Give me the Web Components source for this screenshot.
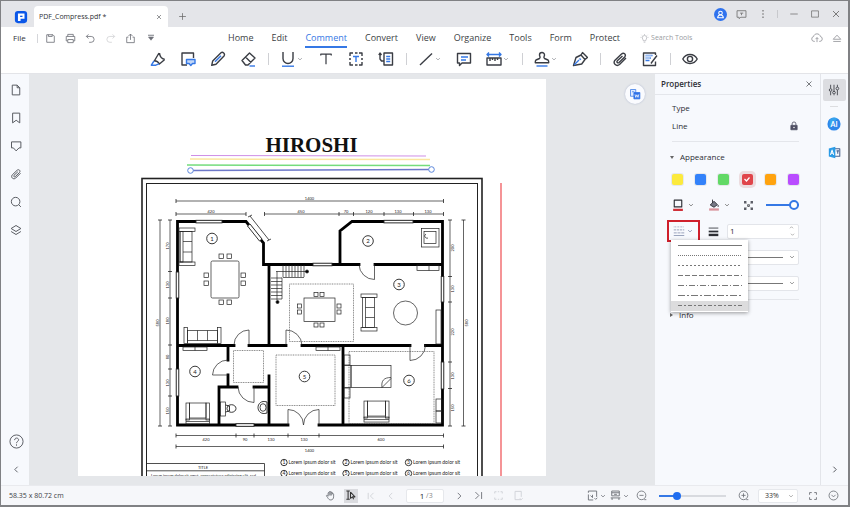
<!DOCTYPE html>
<html lang="en">
<head>
<meta charset="utf-8">
<title>PDF_Compress.pdf</title>
<style>
html,body{margin:0;height:100%}
body{font:8px/12px "Open Sans","Noto Sans",sans-serif;color:#3c3f45;--blue:#3578e5;--rail:#f7f9fd;--ink:#3a3d44;--mute:#82858c}
</style>
</head>
<body>
<app-window></app-window>
<script>
const ICONS={
 logo:'<rect x="1" y="1" width="14" height="14" rx="3.5" fill="#0b57e8" stroke="none"/><path d="M4.500 4h7.500v6h-4.500v2.500h-3z" fill="#fff" stroke="none"/><path d="M7 6.500h2.700v1.500H7z" fill="#0b57e8" stroke="none"/>',
 close:'<path d="M4 4l8 8M12 4l-8 8"/>',
 plus:'<path d="M8 2v12M2 8h12"/>',
 save:'<path d="M2.500 2.500h9l2 2v9h-11zM5 2.500v2.500h5.500V2.500"/>',
 print:'<path d="M4 5V2h8v3M4 11.500H1.800V5h12.400v6.500H12M4 9.500h8V14H4z"/>',
 undo:'<path d="M5 2L2 5l3 3M2 5h7a4 4 0 0 1 0 8.500H6"/>',
 redo:'<path d="M11 2l3 3-3 3M14 5H7a4 4 0 0 0 0 8.500h3"/>',
 share:'<path d="M5 6H2.500v8h11V6H11M8 10V1.500M5 4.500l3-3 3 3"/>',
 more:'<path d="M2 2.500h12" stroke-width="1.800"/><path d="M3 6h10l-5 6.500z" fill="currentColor"/>',
 marker:'<path d="M4 10.500L9 2M9.500 2c.3 3.500 2 5.700 5.300 6.500M4.200 9.700c2.500.2 4.200 1.200 5.200 3.300L14.500 8.700"/><path d="M4 10l-2.700 4.200h4.500L9 12.800" stroke="#3578e5"/>',
 note:'<path d="M7 14H2V2h11.500v5"/><path d="M6.500 8.500h8.500v4h-2.500l-1.700 2-1.700-2H6.500z" stroke="#3578e5" fill="#c3d7f7"/>',
 pencil:'<path d="M1.700 14.300l1-4.300L11 1.800c1.700-1.400 4.500 1 3 3.200L6 13.200z"/><path d="M5 10.800l6-6" stroke="#3578e5"/>',
 eraser:'<path d="M2 9.500L9.500 2 15 7l-7 7H5.500zM5.500 6l5.500 5.500"/><path d="M9.500 15H15" stroke="#3578e5"/>',
 under:'<path d="M3 1v6.500a5 5 0 0 0 10 0V1"/><path d="M2 15.200h12" stroke="#3578e5"/>',
 text:'<path d="M2 4V2.500h12V4M8 2.500v11.500"/>',
 textbox:'<path d="M2 5V2h3M7 2h2.500M11 2h3v3M14 11v3h-3M9.500 14H7M5 14H2v-3M1 8h2M13 8h2"/><path d="M5 5.500h6M8 5.500v5.500" stroke="#3578e5"/>',
 callout:'<path d="M6 2h8.500v12H6zM6 10H3.500L2 8V2M.8 4L2 2l1.500 2"/><path d="M8.200 5.500h4M8.200 8h4M8.200 10.500h4" stroke="#3578e5"/>',
 line:'<path d="M2 14L14 2.500"/>',
 comment:'<path d="M1.500 2.500h13v9.500H6L3.500 14.500V12h-2z"/><path d="M5 6h7M5 9h5" stroke="#3578e5"/>',
 measure:'<path d="M1 7h14v7H1zM4 7v3M6.500 7v2M9 7v3M11.500 7v2"/><path d="M1 3.500h14M3 1.500l-2 2 2 2M13 1.500l2 2-2 2" stroke="#3578e5"/>',
 stamp:'<path d="M5.500 7.500c1.500-1.500 0-2 0-3.500a2.500 2.500 0 0 1 5 0c0 1.500-1.500 2 0 3.500l3.500 1.500c1 1 .7 2 .7 2.800H1.300c0-.8-.3-1.800.7-2.800z"/><path d="M2.500 15h11" stroke="#3578e5"/>',
 pen:'<path d="M1.500 14.500L4 6.500l5-2.500 4 4.500-3.300 4.500zM9 4l1.500-2.500 5 5L13 8.500"/><path d="M2 14l5-5M7.500 7.500l1.300 1.300" stroke="#3578e5"/>',
 clip:'<path d="M14 7l-6.500 6.500c-3 2.500-7-1-4.500-4.300L9.500 3c2.300-2 5 .6 3.200 3L7 11.500c-1.300 1-2.700-.3-1.700-1.700L10.500 5"/>',
 form:'<path d="M13.500 10.500v4h-12V2h12v2M15 4.500l-5 6.500-1 1.500"/><path d="M3.500 4.500h7M3.500 7h5.500M3.500 9.500h4" stroke="#3578e5"/><path d="M3 4h7l-3 5H3z" fill="#c3d7f7" stroke="none" opacity=".7"/>',
 eye:'<path d="M.8 8C4 2 12 2 15.200 8 12 14 4 14 .8 8z"/><circle cx="8" cy="8" r="2.600"/>',
 avatar:'<circle cx="8" cy="8" r="8" fill="#2f72ee" stroke="none"/><circle cx="8" cy="6.200" r="2.200" stroke="#fff"/><path d="M4.500 12c.5-4.500 6.500-4.500 7 0z" stroke="#fff"/>',
 feedback:'<path d="M1.500 2.500h13v9.500H7L4.500 14v-2h-3zM6 6h4.500M8 6v3"/>',
 dots:'<path d="M8 1.500v2.500M8 6.800v2.500M8 12v2.500" stroke-width="2"/>',
 min:'<path d="M2 8h12"/>',max:'<path d="M2.500 3h11v10h-11z"/>',
 bulb:'<path d="M6 12c0-2-2-2.800-2-5.300a4 4 0 0 1 8 0c0 2.500-2 3.300-2 5.300zM6.500 14.500h3M8 0v1.500M1 6h1.500M13.500 6H15M2.500 1.500l1 1M13.500 1.500l-1 1"/>',
 cloud:'<path d="M5 12.500H4a3.300 3.300 0 0 1-.5-6.500c.8-4.700 8-4.700 9 0a3.300 3.300 0 0 1-.5 6.500h-1M8 13.500V7.500M6 9.500l2-2 2 2"/>',
 up:'<path d="M2 10l6-6.500L14 10zM2 13.500h12"/>',
 page:'<path d="M3 1.500h6.500L13 5v9.500H3zM9.500 1.500V5H13"/>',
 bookmark:'<path d="M3.500 1.500h9.500v13L8.200 11l-4.700 3.500z"/>',
 shield:'<path d="M2 2.500h12.500v8H12l-3.800 4-3.700-4H2z"/>',
 search:'<circle cx="7.500" cy="7.500" r="5.700"/><path d="M11.500 11.500l3 3"/>',
 layers:'<path d="M1.500 6L8 2l6.500 4L8 10zM1.500 10L8 14l6.500-4"/>',
 help:'<circle cx="8" cy="8" r="7"/><path d="M6 6.500c0-3 4.200-2.700 4.200-.3C10.200 7.800 8 8 8 9.800M8 11v1.500"/>',
 left:'<path d="M10 3L5 8l5 5"/>',right:'<path d="M6 3l5 5-5 5"/>',down:'<path d="M3 5.500l5 5 5-5"/>',
 first:'<path d="M12 3L7 8l5 5M3.500 3v10"/>',last:'<path d="M3.500 3l5 5-5 5M12.500 3v10"/>',
 sliders:'<path d="M3.500 1v5M3.500 10v5M8 1v9M8 14v1M12.500 1v3M12.500 8v7"/><circle cx="3.500" cy="8" r="1.800"/><circle cx="8" cy="11.500" r="1.800"/><circle cx="12.500" cy="6" r="1.800"/>',
 ai:'<circle cx="8" cy="8" r="7.500" fill="#2d86ea" stroke="none"/><path d="M3 3a7.500 7.500 0 0 1 9-1.500L3 13z" fill="#3bb6ee" stroke="none" opacity=".6"/><text x="8" y="11" text-anchor="middle" font-family="Lato,sans-serif" font-weight="700" font-size="8" fill="#fff" stroke="none">AI</text>',
 trans:'<path d="M8.500 3.500h6v9h-6" stroke="#49618e"/><path d="M1 3l8-2v14l-8-2z" fill="#2a9be6" stroke="none"/><path d="M3 11l2-6 2 6M3.700 9h2.600" stroke="#fff"/><path d="M10.500 6h3M12 6v3.500" stroke="#49618e"/>',
 lock:'<path d="M3 7h10v7H3z" fill="#4e4f63" stroke="#4e4f63"/><path d="M5 7V4.500a3 3 0 0 1 6 0V7" stroke="#4e4f63"/><circle cx="8" cy="10.500" r="1.200" fill="#fff" stroke="none"/>',
 stroke:'<path d="M3 1.500h10v9H3z"/><path d="M1.500 14.500h13" stroke="#cf3038" stroke-width="3"/>',
 fill:'<path d="M3 8l5-5 4.500 4.500L8 11z" fill="#777986"/><path d="M6 .800v4.500M13.500 8v2.500"/><path d="M1.500 14h13" stroke="#d9929a" stroke-width="3"/>',
 checker:'<path d="M1.500 1.500h3.500v3.500H1.500zM11 1.500h3.500v3.500H11zM6 6h4v4H6zM1.500 11h3.500v3.500H1.500zM11 11h3.500v3.500H11z" fill="#5b5d66" stroke="none"/><path d="M5 5l6 6M11 5l-6 6" stroke="#aaa"/>',
 dashes:'<path d="M1 2.500h14" stroke-dasharray="1 1"/><path d="M1 6.500h14" stroke-dasharray="3 1"/><path d="M1 10.500h14" stroke-dasharray="4 1"/><path d="M1 14h14"/>',
 weights:'<path d="M1 3h14" stroke-width="1.200"/><path d="M1 8h14" stroke-width="2.500"/><path d="M1 13h14" stroke-width="3.500"/>',
 hand:'<path d="M4.500 9V4.500c0-1 1.500-1 1.500 0V3c0-1 1.600-1 1.600 0 0-1 1.600-1 1.600 0v1c0-1 1.600-1 1.600 0v2c0-1 1.700-1 1.700 0v4c0 2.500-1.500 4.500-4 4.500S5 13 3.500 10.500L2 8.500c0-1 1.300-1.200 2.500.5zM6 4.500V8M7.600 3v5M9.200 4v4"/>',
 select:'<path d="M2 1.500h5M4.500 1.500v12M2 13.500h5M8 3l6.500 7h-3.500l1.500 3.500M8 3v9l3-2"/>',
 fit:'<path d="M2 4V1.500h12V10M2 6.500v8h7M5 8l3 3V7M11 12l1.500 1.500L15 11.500"/>',
 view:'<path d="M2.500 1.500h11v7h-11zM2.500 4h11M1 11.500h14M3 14.500v-3M13 14.500v-3M6 6.300h4"/>',
 zout:'<circle cx="8" cy="7.800" r="6.300"/><path d="M5 7.800h6M12 14h3"/>',
 zin:'<circle cx="8" cy="7.800" r="6.300"/><path d="M5 7.800h6M8 4.800v6M12 14h3"/>',
 full:'<path d="M2.500 6V2.500H6M10 2.500h3.500V6M13.500 10v3.500H10M6 13.500H2.500V10"/>',
 circdown:'<circle cx="8" cy="8" r="6.500"/><path d="M5 7l3 3 3-3"/>',
 crop:'<path d="M2.500 5V2.500H5M11 2.500h2.500V5M13.500 11v2.500H11M5 13.500H2.500V11M7 2.500h2M7 13.500h2"/>',
 leaf:'<path d="M3 2h9v8M12 14H3V2M10 12l2 2 2-2"/>',
 word:'<path d="M2 2h7v9H2z" fill="#dfeaff" stroke="#3578e5"/><path d="M6.500 6h8v8.500h-8z" fill="#2f72e8" stroke="#2f72e8"/><path d="M8 8.500l1 4 1.500-3.500 1.500 3.500 1-4" stroke="#fff"/><path d="M4 5h3" stroke="#3578e5"/>'
};
function define(name,css,html,extra){
 const t=document.createElement('template');
 t.innerHTML='<style>*{box-sizing:border-box}button{all:unset;box-sizing:border-box;display:flex;align-items:center;justify-content:center;cursor:pointer}'+css+'</style>'+html;
 customElements.define(name,class extends HTMLElement{
  connectedCallback(){ if(this.shadowRoot)return;
   this.attachShadow({mode:'open'}).append(t.content.cloneNode(true)); if(extra)extra.call(this,this.shadowRoot); }
 });
}
const ic=(n,s=12,w='1.300')=>`<ui-icon name="${n}" size="${s}" weight="${w}"></ui-icon>`;
const btn=(n,label,s,w,cls='')=>`<button type="button" class="${cls}" aria-label="${label}">${ic(n,s,w)}</button>`;

define('ui-icon',':host{display:inline-flex;flex:none}svg{display:block;fill:none;stroke:currentColor;stroke-linejoin:round}','<svg viewBox="0 0 16 16" aria-hidden="true"></svg>',function(r){
 const s=r.querySelector('svg'),z=this.getAttribute('size');
 s.setAttribute('width',z);s.setAttribute('height',z);s.setAttribute('stroke-width',this.getAttribute('weight'));
 s.innerHTML=ICONS[this.getAttribute('name')];
});

define('title-bar',`:host{display:flex;height:26px;background:#e4e5e9;align-items:center;font-size:7px;color:#2e3035}
 .logo{display:flex;margin:6px 6px 0 13px}
 .tab{align-self:flex-end;display:flex;align-items:center;justify-content:space-between;width:134px;height:21px;padding:0 5px;background:#fff;border-radius:4px 4px 0 0;white-space:nowrap}
 .new{margin:4px 0 0 8px;width:12px;color:#666}
 .win{margin-left:auto;display:flex;align-items:center;height:26px;padding-right:2px;color:#777}
 .win button{width:21px;height:20px}.win i{width:1px;height:8px;background:#c8c9cd;margin:0 5px 0 4px}`,
 `<span class="logo">${ic('logo',14)}</span><div class="tab"><span>PDF_Compress.pdf *</span>${btn('close','Close tab',8,1)}</div>${btn('plus','New tab',9,1.300,'new')}
 <div class="win">${btn('avatar','Account',13)}${btn('feedback','Feedback',11)}${btn('dots','More',10)}<i></i>${btn('min','Minimize',10)}${btn('max','Maximize',10)}${btn('close','Close',12)}</div>`);

define('menu-bar',`:host{display:flex;align-items:center;height:22px;background:#fff;padding-left:12px;white-space:nowrap}
 .quick{display:flex;align-items:center;width:215px;color:#6e7178}.quick button{width:20px;height:16px}
 .quick .file{width:auto;color:#303238}.quick i{width:1px;height:9px;background:#d5d6da;margin:0 3px 0 11px}
 .off{opacity:.3}
 nav{display:flex;gap:18px;font-size:9px}nav a{color:#3c3f45;text-decoration:none;height:20px;line-height:20px}
 nav a[aria-current]{color:var(--blue);border-bottom:2px solid var(--blue)}
 label{display:flex;align-items:center;gap:2px;margin-left:20px;color:#9a9ca2}
 input{width:52px;border:0;padding:0;background:none;font:inherit;font-size:7px;color:inherit;outline:0}input::placeholder{color:#9a9ca2;opacity:1}
 .end{margin-left:auto;display:flex;color:#85878d;padding-right:1px}.end button{width:20px}`,
 `<div class="quick"><button type="button" class="file">File</button><i></i>${btn('save','Save',11,1.200)}${btn('print','Print',11,1.200)}${btn('undo','Undo',11,1.200)}${btn('redo','Redo',11,1.200,'off')}${btn('share','Share',11,1.200)}${btn('more','Customize',8,1.200)}</div>
 <nav>${['Home','Edit','Comment','Convert','View','Organize','Tools','Form','Protect'].map(x=>`<a href="#"${x=='Comment'?' aria-current="page"':''}>${x}</a>`).join('')}</nav>
 <label>${ic('bulb',9,1)}<input aria-label="Search Tools" placeholder="Search Tools"></label>
 <div class="end">${btn('cloud','Upload',12,1)}${btn('up','Collapse ribbon',10,1.200)}</div>`);

const tools='marker note pencil eraser | under+ text textbox callout | line+ comment measure+ | stamp+ pen | clip form | eye'.split(' ');
define('tool-bar',`:host{display:flex;align-items:center;height:25px;background:#fff;padding:0 0 5px 142px;color:var(--ink);border-bottom:1px solid #e3e4e8}
 button{width:30px;height:20px}.drop{width:38px;padding-left:7px;justify-content:flex-start}.drop ui-icon+ui-icon{color:#92949a;margin-left:1px}
 i{width:1px;height:12px;background:#cfd0d4;margin:0 4px 0 5px}`,
 tools.map(t=>t=='|'?'<i></i>':t.endsWith('+')?`<button type="button" class="drop" aria-label="${t.slice(0,-1)}">${ic(t.slice(0,-1),16,1.400)}${ic('down',6,2)}</button>`:btn(t,t,t=='text'?14:16,1.400)).join(''));

define('side-rail',`:host{display:flex;flex-direction:column;align-items:center;width:28px;background:var(--rail);color:#55585f;padding:2px 0 2px 2px}
 button{width:26px;height:28px}.help{margin-top:auto}`,
 btn('page','Pages',12,1.300)+btn('bookmark','Bookmarks',12)+btn('shield','Comments',12)+btn('clip','Attachments',12)+btn('search','Search',12)+btn('layers','Layers',12)+btn('help','Help',15,1,'help')+btn('left','Collapse',9,1.600));

define('app-rail',`:host{display:flex;flex-direction:column;align-items:center;width:28px;background:var(--rail);border-left:1px solid #e3e5ea;padding:5px 1px 2px 0;color:#44464d}
 button{width:23px;height:28px}.on{height:22px;background:#dcdde1;border-radius:2px}i{width:8px;height:1px;background:#dcdde0;margin:5px 0 3px}.end{margin-top:auto}`,
 btn('sliders','Properties',12,1.200,'on')+'<i></i>'+btn('ai','AI assistant',14)+btn('trans','Translate',13)+btn('right','Expand',9,1.600,'end'));

/* Floor plan drawing, in the page's own units. */
function plan(){
 let s='';
 const L=(x1,y1,x2,y2,a='')=>s+=`<path d="M${x1} ${y1}L${x2} ${y2}" ${a}/>`;
 const R=(x,y,w,h,a='')=>s+=`<rect x="${x}" y="${y}" width="${w}" height="${h}" ${a}/>`;
 const C=(x,y,r,a='')=>s+=`<circle cx="${x}" cy="${y}" r="${r}" ${a}/>`;
 const T=(x,y,t,z=4,a='')=>s+=`<text x="${x}" y="${y}" font-size="${z}" ${a}>${t}</text>`;
 const V=(x,y,t)=>T(x,y,t,4,`transform="rotate(-90 ${x} ${y})"`);
 s+='<text class="title" x="311.500" y="152" font-size="21">HIROSHI</text>';
 L(191,155.5,426,156,'stroke="#cf8fe6" stroke-width="1"');L(190,159,430,159.5,'stroke="#fbe6a0" stroke-width="1.500"');
 L(187,165,430,165.5,'stroke="#74dc7c" stroke-width="1.500"');L(191,170.5,431,169.5,'stroke="#6d78c8" stroke-width="1.500"');
 C(190.5,170.5,2.8,'fill="#fff" stroke="#5a86dc" stroke-width="1"');C(431.5,169.5,2.8,'fill="#fff" stroke="#5a86dc" stroke-width="1"');
 L(501,183,501,480,'stroke="#f05a5f" stroke-width="1.300"');
 R(142,178.5,340,320,'stroke-width="1.600"');R(146.5,183.5,331,320,'stroke-width="1"');
 const H=(y,xs)=>{L(xs[0],y,xs.at(-1),y,'stroke-width=".700"');xs.forEach(x=>L(x,y-2,x,y+2));};
 const W=(x,ys)=>{L(x,ys[0],x,ys.at(-1),'stroke-width=".700"');ys.forEach(y=>L(x-2,y,x+2,y));};
 H(201,[176,443.5]);H(214,[176,246]);H(214,[264.5,339,353.5,384,413.5,443.5]);
 H(435.5,[176,236,254,288,319,443.5]);H(446.5,[176,443.5]);
 W(160,[220,426]);W(170,[220,271.5,298,345,369,396,426]);W(450,[220,276.5,302,362,388.5,426]);W(463.5,[220,426]);
 T(309.5,199.5,'1400');[[211,'420'],[301,'450'],[346,'70'],[369,'120'],[398,'130'],[428,'130']].forEach(a=>T(a[0],212.5,a[1]));
 [[206,'420'],[245,'90'],[271,'130'],[304,'130'],[381,'600']].forEach(a=>T(a[0],440.5,a[1]));T(309.5,451.5,'1400');
 [[246,'170'],[285,'130'],[321,'180'],[357,'80'],[383,'130'],[411,'150']].forEach(a=>V(168.500,a[0],a[1]));V(159,323,'580');
 [[248,'200'],[289,'130'],[332,'220'],[376,'130'],[408,'150']].forEach(a=>V(454,a[0],a[1]));V(467.500,323,'580');
 L(250,216,269,240);L(248,217,252,215);L(267,241,271,239);
 const w='stroke="#000" stroke-width="2.800" stroke-linecap="square"';
 s+=`<path ${w} d="M442.500 264.500H375M359 264.500H263.500V243L246 221.500H177.500V425H288M319 425H442.500V221.500H352L340 231V264M269 264.500V345M177.500 345.500H234M249 345.500H286M302 345.500H410M425.500 345.500H442M228 345.500V360M228 375V387M219 387H237M254 387H269M219 387V425M269 376V425M343 345.500V425"/>`;
 const win='fill="#fff" stroke-width=".900"';
 R(196,220.3,26,2.6,win);R(384,220.3,29,2.6,win);R(313,263.2,19,2.6,win);R(236,423.7,18,2.6,win);
 [[176.2,272,26],[176.2,369,27],[441.2,276.5,25.5],[441.2,362,27]].forEach(a=>R(a[0],a[1],2.6,a[2],win));
 s+='<path fill="#fff" stroke-width=".900" d="M247.500 226l2.500-2 12 15-2.500 2z"/>';
 [[1,212,238.500],[2,368,241],[3,399,284.500],[4,195,371.500],[5,304.500,376.500],[6,409,380.500]].forEach(a=>{C(a[1],a[2],5.3,'stroke-width=".900"');T(a[1],a[2]+2.2,a[0],6);});
 /* doors */
 s+='<path stroke-width=".700" d="M359 264.500a15.500 15.500 0 0 0 15.500 15v-15M249 345v-15a15 15 0 0 0-15 15M286 345v-15a16 16 0 0 1 16 15M410 345v15.500a15.500 15.500 0 0 0 15.500-15.500M228 375h-15.500a15.500 15.500 0 0 1 15.500-15M254 387v15.500a16 16 0 0 1-16-15.500M288 425v-15.500a15.500 15.500 0 0 1 15.500 15.500a15.500 15.500 0 0 1 15.500-15.500v15.500"/>';
 /* seating and tables */
 const f='stroke-width=".700"';
 R(179,228,16,3.5,f);R(179,262,16,3.500,f);R(180,231.5,12,30.5,f);R(180,231.5,3,30.5,f);L(183,241.500,192,241.500,f);L(183,252,192,252,f);
 R(211,261,28,37,f+' rx="1.500"');[[219,254],[227,254],[219,300],[227,300],[204,273],[204,281],[241,273],[241,281]].forEach(a=>R(a[0],a[1],4.500,4.500,f));
 R(184,327.5,3.5,16,f);R(217.500,327.500,3.500,16,f);R(187.500,330.500,30,13,f);L(187.500,340.500,217.500,340.500,f);L(197.500,330.500,197.500,340.500,f);L(207.500,330.500,207.500,340.500,f);
 R(304,298,31,23.500,f);[[314,292.500],[320,292.500],[314,323],[320,323],[297.500,304],[297.500,310],[337,304],[337,310]].forEach(a=>R(a[0],a[1],4,4,f));
 R(289.500,284,64,57.500,'stroke-width=".700" stroke="#555" stroke-dasharray="1 .700"');
 R(361,294,16,3.500,f);R(361,327.500,16,3.500,f);R(362.500,297.500,12,30,f);L(365.500,297.500,365.500,327.500,f);L(365.500,307.500,374.500,307.500,f);L(365.500,317.500,374.500,317.500,f);
 C(405.500,313,12,f);R(421.500,228.500,17.500,18.500,f);R(424,231.500,12,12,f);s+='<path stroke-width=".800" d="M426 234c-3 2 0 5 2 4"/>';
 R(417,265,22,5.500,f);L(429,265,429,270.500,f);R(436,310,5,34,f);
 for(let i=0;i<8;i++)L(283+i*3,265,283+i*3,277,f);L(276,271.500,306,271.500,f);L(283,277.500,304,277.500,f);
 for(let i=0;i<7;i++)L(271,278+i*3.500,282,278+i*3.500,f);L(282,277.500,282,299,f);L(277,271.500,277,300,f);
 C(307,271.500,1.500,'fill="#000"');C(277.500,302,1.500,'fill="#000"');
 R(183,347,24,3.500,f);L(195,347,195,350.500,f);R(316,347,24,3.500,f);L(328,347,328,350.500,f);
 const dot='stroke-width=".700" stroke="#555" stroke-dasharray="1 .700"';
 R(233.500,350.500,30,32,dot);R(276,355,59,50.500,dot);R(349,351.500,85,72,dot);
 [186,364].forEach(x=>{const k=x==186?0:1.500,y=403-k*1.300;R(x,y,3.500,17,f);R(x+20+k,y,3.500,17,f);R(x+3.500,y,16.500+k,15,f);R(x,y+16,23.500+k,5,f);L(x,y+18.500,x+23.500+k,y+18.500,f);});
 R(344,355,6,10,f);R(344,388,6,10,f);R(344,365.500,7,22,f);R(351,365.500,40,22,f);s+='<path stroke-width=".700" d="M391 377.500c-7 0-10 3-9 10l9-9"/>';
 R(436,399,6,12,f);R(436,411,6,12,f);
 R(220.500,402,5,14,f);s+='<ellipse cx="231.500" cy="408.500" rx="4.500" ry="3.800" stroke-width=".900"/><path stroke-width=".900" d="M225.500 405l4 1v5l-4 1"/><path stroke-width=".900" d="M267 402c-6-2-9 2-9 5.500s3 7.500 9 5.500z"/><ellipse cx="263" cy="407.500" rx="3" ry="3.800" stroke-width=".800"/>';
 /* title block and legend */
 s+='<path stroke-width=".800" d="M146.500 463.500H264.500V480M146.500 470.800H264.500"/>';T(203,468.800,'TITLE');
 T(151,477,'Lorem ipsum dolor sit amet, consectetuer adipiscing elit, sed',4,'class="start"');
 [[284,1],[346,2],[408.500,3]].forEach(a=>[[462.500,0],[473.500,3]].forEach(b=>{C(a[0],b[0],3.200,'stroke-width=".900"');T(a[0],b[0]+1.600,a[1]+b[1],5);T(a[0]+4.500,b[0]+1.700,'Lorem ipsum dolor sit',5,'class="start"');}));
 return s;
}
define('document-view',`:host{display:block;position:relative;flex:1;min-width:0;overflow:hidden;background:#e5e7ea;padding:5px 0 9px 49px}
 .sheet{width:468px;max-width:100%;height:100%;background:#fff;overflow:hidden}
 svg{display:block;width:100%;height:100%;fill:none;stroke:#222;stroke-width:.8}
 text{fill:#222;stroke:none;text-anchor:middle;font-family:Lato,sans-serif}.start{text-anchor:start}
 .title{font-family:"Liberation Serif",serif;font-weight:700;fill:#111}
 .convert{position:absolute;right:10px;top:10px;width:20px;height:20px;border-radius:50%;background:#fafbfe;box-shadow:0 0 2px #aab4cc}`,
 `<div class="sheet"><svg viewBox="78 79 468 397" preserveAspectRatio="xMidYMin slice" role="img" aria-label="Floor plan">${plan()}</svg></div><button type="button" class="convert" aria-label="Convert to Word"><ui-icon name="word" size="12" weight="1"></ui-icon></button>`.replace('<svg viewBox','<svg class="plan" viewBox'));

define('line-menu',`:host{position:absolute;left:0;top:100%;width:77px;background:#fff;box-shadow:0 1px 4px #0006;padding:1px 0;z-index:2}
 button{width:100%;height:10px}button:last-child{background:#dcdcdd}svg{width:64px;height:2px;stroke:#777;stroke-width:1;display:block}`,
 ['','1 1','2 2','5 2','6 2 1 2','7 2 2 2','4 2 2 2'].map((d,i)=>`<button type="button" role="menuitem" aria-label="Line style ${i+1}"><svg><path d="M0 .5H64" stroke-dasharray="${d}"/></svg></button>`).join(''));

define('properties-panel',`:host{display:flex;flex-direction:column;width:165px;background:var(--rail);color:#2c2e34;font-size:8px}
 header{display:flex;align-items:center;justify-content:space-between;height:21px;padding:0 5px 0 6px;border-bottom:1px solid #e4e6eb;font-weight:600}
 header button{width:12px;height:12px}
 main{padding:4px 21px 0 17px}.kv{display:flex;align-items:center;justify-content:space-between;height:18px}
 hr{border:0;border-top:1px solid #e4e6eb;margin:0}.kv+hr{margin:6px 0 6px}
 .sum{justify-content:flex-start;height:18px;gap:6px;margin-left:-2px}.sum i{border:2px solid transparent;border-top:3px solid #666;border-bottom:0}.sum.shut i{border:2px solid transparent;border-left:3px solid #666;border-right:0}
 .row{display:flex;align-items:center;height:26px;position:relative}
 .sw{justify-content:space-between}.sw button{width:11px;height:11px;border-radius:2px;background:var(--c);color:#fff;box-shadow:0 0 0 1px #0001}.sw .on{box-shadow:0 0 0 3px #ecdcdf}
 .pick{width:36px;justify-content:flex-start;gap:4px;height:20px}.pick ui-icon+ui-icon{color:#666}
 .box{width:33px;height:22px;margin-left:-5px;gap:2px;padding-left:4px;justify-content:flex-start;border:2px solid #cf1f2b;margin-right:8px;color:#7c88a8}
 .check{width:23px;justify-content:flex-start}
 input[type=range]{appearance:none;width:33px;margin:0;background:none;height:12px}
 input[type=range]::-webkit-slider-runnable-track{height:2px;background:var(--blue)}
 input[type=range]::-webkit-slider-thumb{appearance:none;width:10px;height:10px;margin-top:-4px;border-radius:50%;border:2px solid var(--blue);background:#fff}
 .spin{margin-left:8px;flex:1;display:flex;align-items:center;height:15px;background:#fff;border:1px solid #e3e5ea;border-radius:2px;padding:0 2px}
 .spin input{all:unset;width:50px;font-size:8px;flex:1;min-width:0}.spin span{display:flex;flex-direction:column;color:#888}.spin button{height:6px;width:8px}.spin button:first-child{transform:rotate(180deg)}
 .end{flex:1;height:15px;display:grid;margin-left:55px}select{appearance:none;grid-area:1/1;background:#fff;border:1px solid #e3e5ea;border-radius:2px;width:100%;height:15px;padding:0;color:transparent}
 .end b{grid-area:1/1;align-self:center;height:1px;background:#777;margin:0 16px 0 1px;z-index:1;pointer-events:none}.end ui-icon{grid-area:1/1;place-self:center end;margin-right:4px;z-index:1;pointer-events:none;color:#777}
 line-menu{left:-1px;top:22px}.last{margin:3px 0 6px}`,
 `<header><span>Properties</span>${btn('close','Close panel',10,1)}</header><main>
 <div class="kv">Type</div><div class="kv"><span>Line</span>${ic('lock',10)}</div><hr>
 <button type="button" class="sum" aria-expanded="true"><i></i>Appearance</button>
 <div class="row sw">${[['#fcea3d','Yellow'],['#3382fa','Blue'],['#62d966','Green'],['#e0454b','Red'],['#ffa30f','Orange'],['#b94cff','Purple']].map(c=>`<button type="button" aria-label="${c[1]}" style="--c:${c[0]}" ${c[1]=='Red'?'class="on"':''}>${c[1]=='Red'?'<svg width="8" height="8" viewBox="0 0 8 8" fill="none" stroke="#fff" stroke-width="1.200"><path d="M1.500 4l2 2 3-3.500"/></svg>':''}</button>`).join('')}</div>
 <div class="row"><button type="button" class="pick" aria-label="Line colour">${ic('stroke',12,1.500)}${ic('down',6,2)}</button><button type="button" class="pick" aria-label="Fill colour">${ic('fill',12,1.200)}${ic('down',6,2)}</button>${btn('checker','Opacity',11,1,'check')}<input type="range" value="100" aria-label="Opacity level"></div>
 <div class="row"><button type="button" class="box" aria-label="Line style" aria-expanded="true">${ic('dashes',12,1)}${ic('down',6,2)}</button>${ic('weights',11)}<div class="spin"><input type="text" value="1" aria-label="Line width"><span>${btn('down','Increase',5,2)}${btn('down','Decrease',5,2)}</span></div><line-menu role="menu"></line-menu></div>
 <div class="row"><div class="end"><select aria-label="Line start"><option>None</option></select><b></b>${ic('down',6,2)}</div></div>
 <div class="row"><div class="end"><select aria-label="Line end"><option>None</option></select><b></b>${ic('down',6,2)}</div></div>
 <hr class="last"><button type="button" class="sum shut" aria-expanded="false"><i></i>Info</button></main>`);

define('status-bar',`:host{display:grid;grid-template-columns:1fr auto 1fr;align-items:center;height:20px;background:#f6f7fa;border-top:1px solid #e9eaee;font-size:7px;color:#3c3f45}
 .pos{padding-left:8px}.nav,.zoom{display:flex;align-items:center;color:#6b6e75}.zoom{justify-content:flex-end;padding-right:5px}
 button{width:20px;height:16px}.on{width:14px;height:14px;margin:0 3px;background:#dadbdf;color:#333}.off{color:#cfd1d6}
 .pg{display:flex;align-items:center;justify-content:center;width:38px;height:14px;margin:0 5px;background:#fff;border:1px solid #e6e8ec;border-radius:2px;color:#888}
 .pg input{all:unset;width:8px;text-align:right;color:#222;font-size:8px}
 .two{width:23px;gap:2px}input[type=range]{appearance:none;width:67px;margin:0 7px 0 8px;height:12px;background:none}
 input[type=range]::-webkit-slider-runnable-track{height:2px;background:linear-gradient(90deg,var(--blue) 25%,#d8dadf 25%)}
 input[type=range]::-webkit-slider-thumb{appearance:none;width:8px;height:8px;margin-top:-3px;border-radius:50%;background:#1f6df0}
 .sel{display:grid;margin:0 5px;width:40px}.sel>*{grid-area:1/1}.sel ui-icon{place-self:center end;margin-right:4px;pointer-events:none;color:#999}
 select{appearance:none;border:1px solid #e6e8ec;border-radius:2px;background:#fff;height:14px;font:inherit;line-height:10px;font-size:7px;color:#333;padding:0 0 0 6px}`,
 `<span class="pos">58.35 x 80.72 cm</span>
 <div class="nav">${btn('hand','Hand',11,1.200)}${btn('select','Select',11,1.500,'on')}${btn('first','First page',10,1.400,'off')}${btn('left','Previous page',10,1.400,'off')}<label class="pg"><input type="text" value="1" aria-label="Page">&nbsp;/3</label>${btn('right','Next page',10,1.400)}${btn('last','Last page',11,1.300)}${btn('crop','Crop',11,1.300,'off')}${btn('leaf','Page view',11,1.300,'off')}</div>
 <div class="zoom"><button type="button" class="two" aria-label="Fit">${ic('fit',11)}${ic('down',6,2)}</button><button type="button" class="two" aria-label="View mode">${ic('view',11)}${ic('down',6,2)}</button>${btn('zout','Zoom out',11,1.200)}<input type="range" value="24" aria-label="Zoom">${btn('zin','Zoom in',11,1.200)}<div class="sel"><select aria-label="Zoom level"><option>33%</option></select>${ic('down',6,2)}</div>${btn('full','Full screen',10,1.400)}${btn('circdown','More',11,1.200)}</div>`);

define('app-window',`:host{display:flex;flex-direction:column;height:100vh;border:solid #808184;border-width:1px 2px 2px 1px;background:#f6f7fa;box-sizing:border-box;overflow:hidden}
 .work{display:flex;flex:1;min-height:0}.work>*{box-sizing:border-box}.work side-rail,.work app-rail,.work properties-panel{flex:none}title-bar,menu-bar,tool-bar,status-bar{flex:none;box-sizing:border-box}`,
 '<title-bar></title-bar><menu-bar></menu-bar><tool-bar></tool-bar><div class="work"><side-rail></side-rail><document-view></document-view><properties-panel></properties-panel><app-rail></app-rail></div><status-bar></status-bar>');
</script>
</body>
</html>
